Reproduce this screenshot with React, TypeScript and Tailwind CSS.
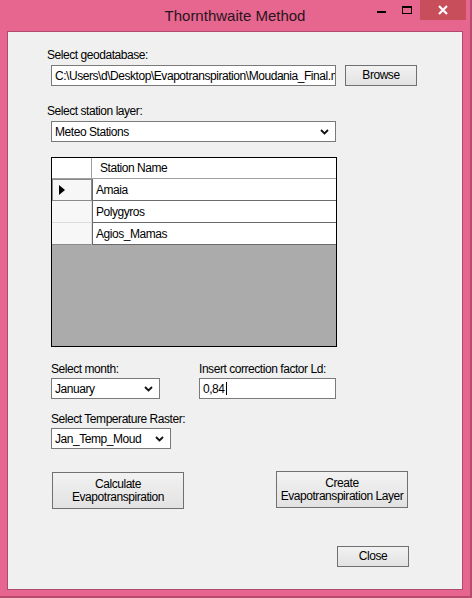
import React from "react";

const font = { fontFamily: '"Liberation Sans", Arial, sans-serif' };

function Chevron() {
  return (
    <svg width="9" height="6" viewBox="0 0 9 6" className="shrink-0">
      <path d="M1 1 L4.5 4.5 L8 1" fill="none" stroke="#111" strokeWidth={1.8} />
    </svg>
  );
}

function Combo({ value, width }: { value: string; width: string }) {
  return (
    <div
      className={`${width} h-[21px] bg-white border border-[#7a7a7a] flex items-center justify-between pl-[3px] pr-[6px] text-black`}
    >
      <span>{value}</span>
      <Chevron />
    </div>
  );
}

function Btn({ children, className }: { children: React.ReactNode; className: string }) {
  return (
    <button
      type="button"
      className={`${className} border border-[#707070] bg-gradient-to-b from-[#f2f2f2] to-[#e2e2e2] text-[12px] tracking-[-0.45px] leading-[13px] text-black flex flex-col items-center justify-center whitespace-nowrap`}
    >
      {children}
    </button>
  );
}

const stations = ["Amaia", "Polygyros", "Agios_Mamas"];

export default function App() {
  return (
    <div style={font} className="w-[472px] h-[598px] bg-[#e6668f] border-r-2 border-b-2 border-[#b84a6e] flex flex-col">
      {/* title bar */}
      <div className="h-[31px] relative flex justify-center pt-[5px]">
        <span className="text-[15px] text-[#2a1420]">Thornthwaite Method</span>
        <div className="absolute right-[4px] top-0 flex items-start">
          <div className="w-[26px] h-[20px] flex items-center justify-center">
            <div className="w-[9px] h-[2px] bg-black mt-[4px]" />
          </div>
          <div className="w-[26px] h-[20px] flex items-center justify-center">
            <div className="w-[10px] h-[8px] border border-black border-t-2" />
          </div>
          <div className="w-[46px] h-[20px] bg-[#c74e5a] flex items-center justify-center">
            <svg width="10" height="10" viewBox="0 0 10 10">
              <path d="M1 1 L9 9 M9 1 L1 9" stroke="#fff" strokeWidth={2.2} />
            </svg>
          </div>
        </div>
      </div>

      {/* client area */}
      <div className="mx-[7px] h-[559px] bg-[#f0f0f0] border border-[#b04870] flex flex-col text-[12px] tracking-[-0.45px] text-black">
        <div className="ml-[39px] mt-[16px] h-[14px] leading-[14px]">Select geodatabase:</div>
        <div className="flex mt-[3px] ml-[43px] gap-[9px]">
          <div className="w-[285px] h-[21px] bg-white border border-[#7a7a7a] flex items-center pl-[3px] overflow-hidden whitespace-nowrap">
            C:\Users\d\Desktop\Evapotranspiration\Moudania_Final.m
          </div>
          <Btn className="w-[72px] h-[21px]">Browse</Btn>
        </div>

        <div className="ml-[39px] mt-[18px] h-[14px] leading-[14px]">Select station layer:</div>
        <div className="ml-[43px] mt-[3px]">
          <Combo value="Meteo Stations" width="w-[285px]" />
        </div>

        {/* data grid */}
        <div className="ml-[43px] mt-[15px] w-[286px] h-[190px] border border-black bg-[#ababab] flex flex-col">
          <div className="flex h-[21px] bg-white border-b border-[#a0a0a0]">
            <div className="w-[40px] border-r border-[#a0a0a0]" />
            <div className="flex-1 flex items-center pl-[8px]">Station Name</div>
          </div>
          {stations.map((s, i) => (
            <div key={s} className="flex h-[22px]">
              <div
                className={`w-[40px] bg-[#f7f7f7] flex items-center pl-[6px] ${
                  i === 0 ? "border border-[#8a8a8a]" : "border-r border-b border-[#dcdcdc]"
                } ${i === 2 ? "border-b-[#8a8a8a]" : ""}`}
              >
                {i === 0 && (
                  <svg width="6" height="10" viewBox="0 0 6 10">
                    <path d="M0 0 L6 5 L0 10 Z" fill="#000" />
                  </svg>
                )}
              </div>
              <div className="flex-1 bg-white border-b border-[#6a6a6a] border-l border-l-[#6a6a6a] flex items-center pl-[3px]">
                {s}
              </div>
            </div>
          ))}
        </div>

        <div className="flex mt-[15px] ml-[43px]">
          <div className="flex flex-col w-[148px]">
            <div className="h-[14px] leading-[14px]">Select month:</div>
            <div className="mt-[2px]">
              <Combo value="January" width="w-[109px]" />
            </div>
          </div>
          <div className="flex flex-col">
            <div className="h-[14px] leading-[14px]">Insert correction factor Ld:</div>
            <div className="mt-[2px] w-[137px] h-[21px] bg-white border border-[#7a7a7a] flex items-center pl-[3px]">
              0,84<span className="w-px h-[13px] bg-black ml-px" />
            </div>
          </div>
        </div>

        <div className="ml-[43px] mt-[13px] h-[14px] leading-[14px]">Select Temperature Raster:</div>
        <div className="ml-[43px] mt-[2px]">
          <Combo value="Jan_Temp_Moud" width="w-[120px]" />
        </div>

        <div className="flex mt-[23px] ml-[44px] items-start">
          <Btn className="w-[132px] h-[37px]">
            <span>Calculate</span>
            <span>Evapotranspiration</span>
          </Btn>
          <Btn className="w-[132px] h-[37px] ml-[92px] -mt-[1px]">
            <span>Create</span>
            <span>Evapotranspiration Layer</span>
          </Btn>
        </div>

        <div className="flex ml-[329px] mt-[37px]">
          <Btn className="w-[72px] h-[21px]">Close</Btn>
        </div>
      </div>
    </div>
  );
}
